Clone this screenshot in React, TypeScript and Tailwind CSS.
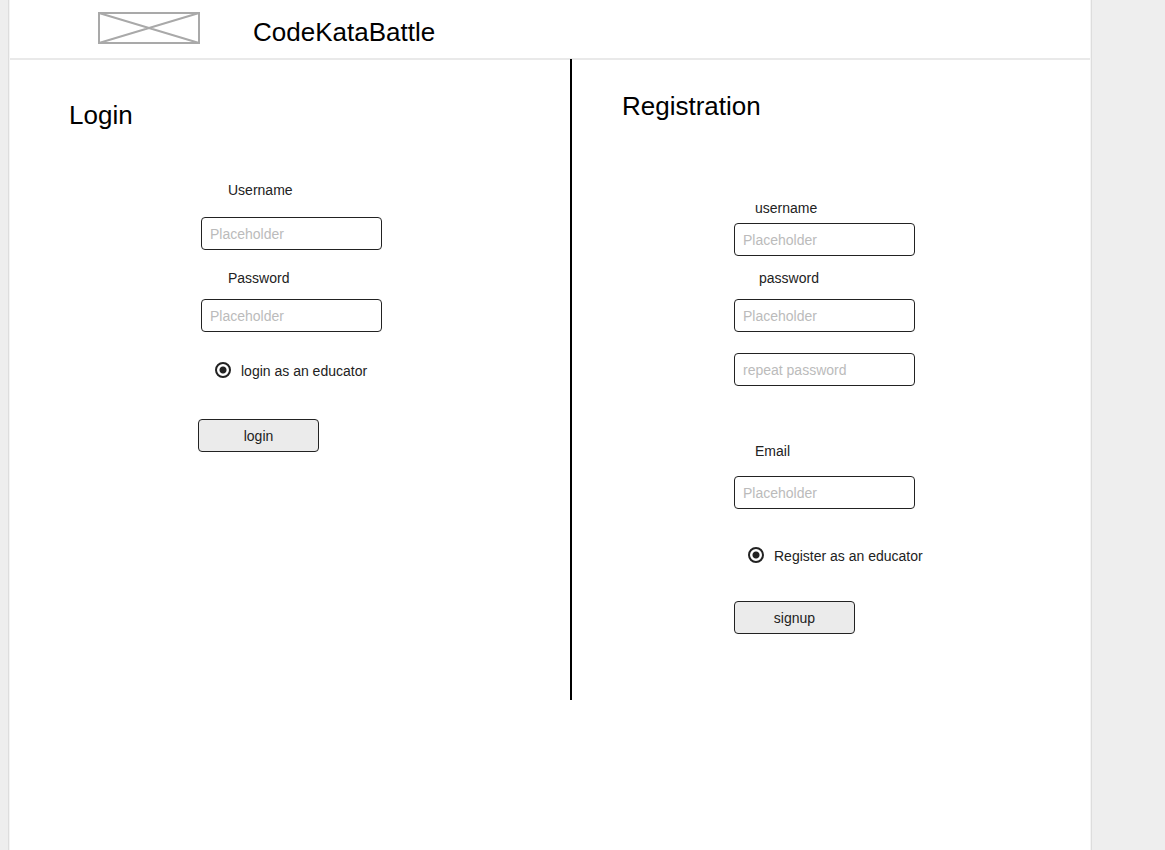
import type { ComponentProps, ReactNode } from "react";

function Logo() {
  return (
    <svg
      className="h-8 w-[102px] shrink-0 text-[#a9a9a9]"
      viewBox="0 0 102 32"
      fill="none"
      stroke="currentColor"
      role="img"
      aria-label="Logo"
    >
      <path d="M1 1L101 31M101 1L1 31" strokeWidth="2" />
      <rect x="1" y="1" width="100" height="30" strokeWidth="2" />
    </svg>
  );
}

function Label({ className = "", ...props }: ComponentProps<"label">) {
  return <label className={`block leading-5 ${className}`} {...props} />;
}

function TextInput({ className = "", ...props }: ComponentProps<"input">) {
  return (
    <input
      className={`block h-[33px] w-[181px] rounded-sm border border-[#222] bg-white px-2 leading-5 outline-none placeholder:text-[#bbb] focus:ring-1 focus:ring-[#222] ${className}`}
      {...props}
    />
  );
}

function RadioOption({ name, className = "", children }: { name: string; className?: string; children: ReactNode }) {
  return (
    <label className={`flex w-max items-start gap-[10px] leading-5 ${className}`}>
      <input
        type="radio"
        name={name}
        defaultChecked
        className="mt-px size-4 appearance-none rounded-full border-2 border-[#222] checked:bg-[radial-gradient(circle,#222_3px,transparent_4px)]"
      />
      {children}
    </label>
  );
}

function SubmitButton({ className = "", children }: { className?: string; children: ReactNode }) {
  return (
    <button
      type="submit"
      className={`block h-[33px] w-[121px] rounded-sm border border-[#222] bg-[#ebebeb] leading-5 hover:bg-[#dfdfdf] ${className}`}
    >
      {children}
    </button>
  );
}

function LoginSection() {
  return (
    <section className="pt-[39px]">
      <h2 className="ml-[59px] text-[26px] leading-8 text-black">Login</h2>
      <form className="mt-[49px] ml-[188px]" onSubmit={(e) => e.preventDefault()}>
        <div className="ml-[3px]">
          <Label htmlFor="login-username" className="ml-[27px]">Username</Label>
          <TextInput id="login-username" placeholder="Placeholder" className="mt-[17px]" />
          <Label htmlFor="login-password" className="mt-[18px] ml-[27px]">Password</Label>
          <TextInput id="login-password" type="password" placeholder="Placeholder" className="mt-[11px]" />
          <RadioOption name="login-role" className="mt-[29px] ml-[14px]">login as an educator</RadioOption>
        </div>
        <SubmitButton className="mt-[38px]">login</SubmitButton>
      </form>
    </section>
  );
}

function RegistrationSection() {
  return (
    <section className="-mt-px min-h-[641px] border-l-2 border-black pt-[31px]">
      <h2 className="ml-[50px] text-[26px] leading-8 text-black">Registration</h2>
      <form className="mt-[76px] ml-[162px]" onSubmit={(e) => e.preventDefault()}>
        <Label htmlFor="signup-username" className="ml-[21px]">username</Label>
        <TextInput id="signup-username" placeholder="Placeholder" className="mt-[5px]" />
        <Label htmlFor="signup-password" className="mt-3 ml-[25px]">password</Label>
        <TextInput id="signup-password" type="password" placeholder="Placeholder" className="mt-[11px]" />
        <TextInput type="password" aria-label="repeat password" placeholder="repeat password" className="mt-[21px]" />
        <Label htmlFor="signup-email" className="mt-[55px] ml-[21px]">Email</Label>
        <TextInput id="signup-email" type="email" placeholder="Placeholder" className="mt-[15px]" />
        <RadioOption name="signup-role" className="mt-[37px] ml-[14px]">Register as an educator</RadioOption>
        <SubmitButton className="mt-[35px]">signup</SubmitButton>
      </form>
    </section>
  );
}

export default function App() {
  return (
    <div className="flex min-h-screen bg-[#eee] pr-[73px] pl-2 font-['Liberation_Sans',Arial,sans-serif] text-sm text-[#222]">
      <div className="flex-1 border-x border-[#ddd] bg-[#f4f4f4] px-px">
        <div className="min-h-screen bg-white">
          <header className="flex items-start border-b-2 border-[#e9e9e9] pt-3 pb-[10px] pl-[88px]">
            <Logo />
            <h1 className="mt-1 ml-[53px] text-[26px] leading-8 text-black">CodeKataBattle</h1>
          </header>
          <main className="grid grid-cols-[560fr_520fr] items-start">
            <LoginSection />
            <RegistrationSection />
          </main>
        </div>
      </div>
    </div>
  );
}
